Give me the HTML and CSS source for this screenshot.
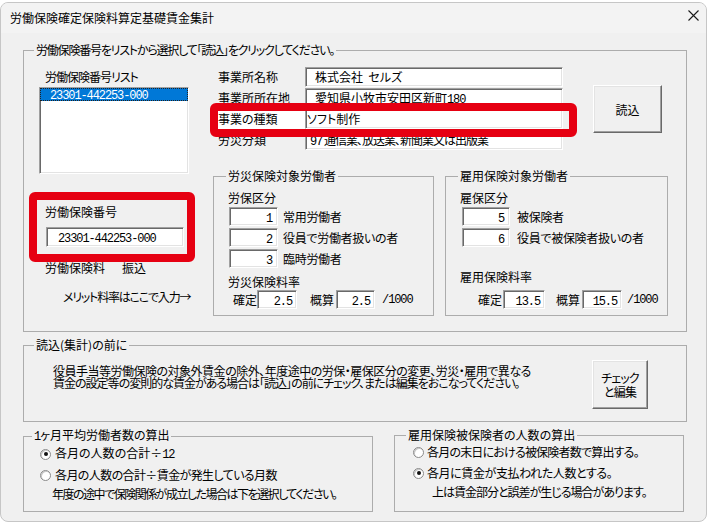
FILE: index.html
```html
<!DOCTYPE html>
<html lang="ja">
<head>
    <meta charset="UTF-8">
    <meta name="viewport" content="width=device-width, initial-scale=1.0">
    <title>労働保険確定保険料算定基礎賃金集計</title>
    <link rel="stylesheet" href="styles.css">
</head>
<body>

    <div class="rs-window">
        <div class="rs-titlebar">
            <span class="rs-title">労働保険確定保険料算定基礎賃金集計</span>
            <svg class="rs-close" width="11" height="11" viewBox="0 0 11 11">
                <path d="M0.5 0.5L10.5 10.5M10.5 0.5L0.5 10.5" stroke="#1a1a1a" stroke-width="1.1" fill="none"/>
            </svg>
        </div>

        <div class="rs-client">
            <fieldset class="rs-group rs-main">
                <legend class="rs-tight-12">労働保険番号をリストから選択して「読込」をクリックしてください。</legend>
                <div class="rs-main-body">
                    <div class="rs-left-col">
                        <div class="rs-list-label">労働保険番号リスト</div>
                        <div class="rs-listbox">
                            <div class="rs-list-item"><span class="rs-num">23301-442253-000</span></div>
                        </div>
                        <div class="rs-no-label">労働保険番号</div>
                        <div class="rs-field rs-no-field"><span class="rs-num">23301-442253-000</span></div>
                        <div class="rs-fee"><span>労働保険料</span><span class="rs-fee-kind">振込</span></div>
                        <div class="rs-merit">メリット料率はここで入力→</div>
                    </div>

                    <div class="rs-right-area">
                        <div class="rs-info-row">
                            <div class="rs-info">
                                <div class="rs-info-line">
                                    <span class="rs-info-label">事業所名称</span>
                                    <span class="rs-field rs-info-field">株式会社&nbsp;&nbsp;セルズ</span>
                                </div>
                                <div class="rs-info-line">
                                    <span class="rs-info-label">事業所所在地</span>
                                    <span class="rs-field rs-info-field">愛知県小牧市安田区新町<span class="rs-num">180</span></span>
                                </div>
                                <div class="rs-info-line">
                                    <span class="rs-info-label rs-info-label-hl">事業の種類</span>
                                    <span class="rs-field rs-info-field rs-info-field-tight">ソフト制作</span>
                                </div>
                                <div class="rs-info-line">
                                    <span class="rs-info-label">労災分類</span>
                                    <span class="rs-field rs-info-field rs-info-field-mid"><span class="rs-num">97</span> 通信業、放送業、新聞業又は出版業</span>
                                </div>
                            </div>
                            <button class="rs-button rs-read">読込</button>
                        </div>

                        <div class="rs-groups-row">
                            <fieldset class="rs-group rs-rousai">
                                <legend>労災保険対象労働者</legend>
                                <div class="rs-sub-label">労保区分</div>
                                <div class="rs-kubun rs-kubun-rousai">
                                    <div class="rs-kubun-row"><span class="rs-field rs-numbox"><span class="rs-num">1</span></span><span class="rs-kubun-text">常用労働者</span></div>
                                    <div class="rs-kubun-row"><span class="rs-field rs-numbox"><span class="rs-num">2</span></span><span class="rs-kubun-text">役員で労働者扱いの者</span></div>
                                    <div class="rs-kubun-row"><span class="rs-field rs-numbox"><span class="rs-num">3</span></span><span class="rs-kubun-text">臨時労働者</span></div>
                                </div>
                                <div class="rs-sub-label rs-rate-label-rousai">労災保険料率</div>
                                <div class="rs-rate-row rs-rate-rousai">
                                    <span>確定</span>
                                    <span class="rs-field rs-numbox rs-rate-box"><span class="rs-num">2.5</span></span>
                                    <span class="rs-rate-gaisan">概算</span>
                                    <span class="rs-field rs-numbox rs-rate-box rs-rate-box-2"><span class="rs-num">2.5</span></span>
                                    <span class="rs-num rs-per">/1000</span>
                                </div>
                            </fieldset>

                            <fieldset class="rs-group rs-koyou">
                                <legend>雇用保険対象労働者</legend>
                                <div class="rs-sub-label">雇保区分</div>
                                <div class="rs-kubun rs-kubun-koyou">
                                    <div class="rs-kubun-row"><span class="rs-field rs-numbox"><span class="rs-num">5</span></span><span class="rs-kubun-text">被保険者</span></div>
                                    <div class="rs-kubun-row"><span class="rs-field rs-numbox"><span class="rs-num">6</span></span><span class="rs-kubun-text">役員で被保険者扱いの者</span></div>
                                </div>
                                <div class="rs-sub-label rs-rate-label-koyou">雇用保険料率</div>
                                <div class="rs-rate-row rs-rate-koyou">
                                    <span>確定</span>
                                    <span class="rs-field rs-numbox rs-rate-box"><span class="rs-num">13.5</span></span>
                                    <span class="rs-rate-gaisan">概算</span>
                                    <span class="rs-field rs-numbox rs-rate-box rs-rate-box-2"><span class="rs-num">15.5</span></span>
                                    <span class="rs-num rs-per">/1000</span>
                                </div>
                            </fieldset>
                        </div>
                    </div>
                </div>
            </fieldset>

            <fieldset class="rs-group rs-before">
                <legend>読込(集計)の前に</legend>
                <div class="rs-before-body">
                    <p class="rs-before-text">
                        <span class="rs-before-line1">役員手当等労働保険の対象外賃金の除外、年度途中の労保・雇保区分の変更、労災・雇用で異なる</span><br>
                        <span class="rs-before-line2">賃金の設定等の変則的な賃金がある場合は「読込」の前にチェック、または編集をおこなってください。</span>
                    </p>
                    <button class="rs-button rs-check">チェック<br>と編集</button>
                </div>
            </fieldset>

            <div class="rs-bottom-row">
                <fieldset class="rs-group rs-avg">
                    <legend><span class="rs-num">1</span>ヶ月平均労働者数の算出</legend>
                    <div class="rs-radio-row rs-radio-first">
                        <span class="rs-radio rs-radio-on"></span>
                        <span class="rs-radio-text">各月の人数の合計÷<span class="rs-num">12</span></span>
                    </div>
                    <div class="rs-radio-row rs-radio-second">
                        <span class="rs-radio"></span>
                        <span class="rs-radio-text rs-tight-6">各月の人数の合計÷賃金が発生している月数</span>
                    </div>
                    <div class="rs-radio-note rs-tight-15">年度の途中で保険関係が成立した場合は下を選択してください。</div>
                </fieldset>

                <fieldset class="rs-group rs-count">
                    <legend>雇用保険被保険者の人数の算出</legend>
                    <div class="rs-radio-row rs-radio-first">
                        <span class="rs-radio"></span>
                        <span class="rs-radio-text rs-tight-8">各月の末日における被保険者数で算出する。</span>
                    </div>
                    <div class="rs-radio-row rs-radio-second">
                        <span class="rs-radio rs-radio-on"></span>
                        <span class="rs-radio-text rs-tight-4">各月に賃金が支払われた人数とする。</span>
                    </div>
                    <div class="rs-radio-note rs-tight-10">上は賃金部分と誤差が生じる場合があります。</div>
                </fieldset>
            </div>
        </div>

        <!-- red markers drawn over the dialog -->
        <div class="rs-mark rs-mark-kind"></div>
        <div class="rs-mark rs-mark-number"></div>
    </div>

</body>
</html>
```

FILE: styles.css
```css
:root {
    --face-color: #f0f0f0;
    --title-color: #f3f3f3;
    --group-line: #acacac;
    --shadow-dark: #696969;
    --shadow-mid: #a0a0a0;
    --shadow-light: #e3e3e3;
    --select-color: #0078d7;
    --mark-color: #e60012;
}

body {
    margin: 0;
    background-color: #fff;
    font-family: "Noto Sans CJK JP", sans-serif;
    font-size: 12px;
    font-feature-settings: "palt";
    color: #000;
}

/* kana in the dialog font run narrower than Noto, so long texts are tightened */
.rs-tight-4 { letter-spacing: -0.4px; }
.rs-tight-6 { letter-spacing: -0.6px; }
.rs-tight-8 { letter-spacing: -0.8px; }
.rs-tight-10 { letter-spacing: -1px; }
.rs-tight-12 { letter-spacing: -1.2px; }
.rs-tight-15 { letter-spacing: -1.5px; }

.rs-window {
    position: relative;
    box-sizing: border-box;
    width: 707px;
    height: 520px;
    margin-top: 2px;
    border: 1px solid #c6c6c6;
    border-radius: 8px;
    background-color: var(--face-color);
    overflow: hidden;
}

.rs-titlebar {
    display: flex;
    justify-content: space-between;
    height: 30px;
    padding: 0 7px 0 9px;
    background-color: var(--title-color);
}

.rs-title {
    line-height: 30px;
}

.rs-close {
    margin-top: 7px;
}

.rs-client {
    padding: 10px 0 0 22px;
}

/* group boxes */
.rs-group {
    box-sizing: border-box;
    margin: 0;
    padding: 0;
    min-width: 0;
    border: 1px solid var(--group-line);
}

.rs-group legend {
    margin-left: 10px;
    padding: 0 2px;
    line-height: 14px;
    white-space: nowrap;
}

.rs-num {
    font-family: "Liberation Mono", monospace;
    font-size: 12px;
    letter-spacing: -1.1px;
}

/* sunken edit field */
.rs-field {
    box-sizing: border-box;
    display: block;
    background-color: #fff;
    border: 1px solid;
    border-color: var(--shadow-mid) #fff #fff var(--shadow-mid);
    box-shadow: inset 1px 1px 0 var(--shadow-dark), inset -1px -1px 0 var(--shadow-light);
    white-space: nowrap;
    overflow: hidden;
}

.rs-button {
    box-sizing: border-box;
    padding: 0;
    font: inherit;
    color: #000;
    background-color: var(--face-color);
    border: 1px solid;
    border-color: #fff var(--shadow-dark) var(--shadow-dark) #fff;
    box-shadow: inset -1px -1px 0 var(--shadow-mid), inset 1px 1px 0 var(--shadow-light);
}

/* main group */
.rs-main {
    width: 664px;
    height: 289px;
}

.rs-main-body {
    display: flex;
}

.rs-left-col {
    width: 189px;
    flex-shrink: 0;
}

.rs-list-label {
    margin: 13px 0 0 21px;
    line-height: 14px;
    letter-spacing: -1px;
}

.rs-listbox {
    box-sizing: border-box;
    width: 150px;
    height: 87px;
    margin: 3px 0 0 15px;
    background-color: #fff;
    border: 1px solid;
    border-color: var(--shadow-mid) #fff #fff var(--shadow-mid);
    box-shadow: inset 1px 1px 0 var(--shadow-dark), inset -1px -1px 0 var(--shadow-light);
}

.rs-list-item {
    height: 13px;
    padding-left: 10px;
    line-height: 12px;
    color: #fff;
    background-color: var(--select-color);
    outline: 1px dotted #222;
    outline-offset: -1px;
}

.rs-no-label {
    margin: 31px 0 0 21px;
    line-height: 14px;
}

.rs-no-field {
    width: 138px;
    height: 20px;
    margin: 8px 0 0 22px;
    padding-left: 11px;
    line-height: 18px;
}

.rs-fee {
    margin: 14px 0 0 21px;
    line-height: 14px;
}

.rs-fee-kind {
    margin-left: 17px;
}

.rs-merit {
    margin: 15px 0 0 39px;
    line-height: 14px;
    letter-spacing: -1.2px;
    white-space: nowrap;
}

.rs-right-area {
    display: flex;
    flex-direction: column;
}

.rs-info-row {
    display: flex;
    margin-top: 10px;
}

.rs-info {
    display: flex;
    flex-direction: column;
    gap: 1px;
    padding-left: 5px;
}

.rs-info-line {
    display: flex;
    align-items: center;
    height: 20px;
}

.rs-info-label {
    width: 87px;
    height: 20px;
    line-height: 20px;
}

.rs-info-label-hl {
    background-color: #fff;
}

.rs-info-field {
    width: 258px;
    height: 20px;
    padding-left: 9px;
    line-height: 18px;
}

.rs-info-field-tight {
    padding-left: 1px;
}

.rs-info-field-mid {
    padding-left: 4px;
    letter-spacing: -1px;
}

.rs-read {
    width: 69px;
    height: 48px;
    margin: 18px 0 0 30px;
}

.rs-groups-row {
    display: flex;
    gap: 11px;
    margin-top: 19px;
}

.rs-rousai,
.rs-koyou {
    height: 147px;
}

.rs-rousai {
    width: 221px;
}

.rs-koyou {
    width: 223px;
}

.rs-rousai legend,
.rs-koyou legend {
    margin-left: 12px;
}

.rs-sub-label {
    margin: 8px 0 0 14px;
    line-height: 14px;
}

.rs-kubun {
    display: flex;
    flex-direction: column;
    gap: 2px;
    margin-top: 2px;
}

.rs-kubun-rousai {
    margin-left: 15px;
}

.rs-kubun-koyou {
    margin-left: 16px;
}

.rs-kubun-row {
    display: flex;
    align-items: center;
    height: 19px;
}

.rs-numbox {
    width: 49px;
    height: 19px;
    padding-right: 5px;
    text-align: right;
    line-height: 17px;
}

.rs-kubun-koyou .rs-numbox {
    width: 48px;
}

.rs-kubun-text {
    margin-left: 5px;
    letter-spacing: -0.3px;
}

.rs-kubun-koyou .rs-kubun-text {
    margin-left: 7px;
}

.rs-rate-label-rousai {
    margin-top: 7px;
}

.rs-rate-label-koyou {
    margin-top: 23px;
}

.rs-rate-row {
    display: flex;
    align-items: center;
    height: 19px;
}

.rs-rate-rousai {
    margin: 1px 0 0 19px;
}

.rs-rate-koyou {
    margin: 6px 0 0 32px;
}

.rs-rate-box {
    width: 40px;
    padding-right: 4px;
}

.rs-rate-gaisan {
    margin-left: 13px;
}

.rs-rate-box-2 {
    margin-left: 2px;
    width: 39px;
}

.rs-per {
    margin-left: 7px;
}

.rs-rate-koyou .rs-rate-box {
    width: 42px;
    margin-left: 1px;
}

.rs-rate-koyou .rs-rate-gaisan {
    margin-left: 11px;
}

.rs-rate-koyou .rs-rate-box-2 {
    width: 40px;
    margin-left: 2px;
}

.rs-rate-koyou .rs-per {
    margin-left: 5px;
}

/* before-reading group */
.rs-before {
    width: 664px;
    height: 84px;
    margin-top: 6px;
}

.rs-before-body {
    display: flex;
    align-items: flex-start;
}

.rs-before-text {
    margin: 13px 0 0 29px;
    line-height: 12px;
    white-space: nowrap;
}

.rs-before-line1 {
    letter-spacing: -0.5px;
}

.rs-before-line2 {
    letter-spacing: -1px;
}

.rs-check {
    width: 56px;
    height: 49px;
    margin: 8px 38px 0 auto;
    line-height: 14px;
    letter-spacing: -0.8px;
}

/* bottom groups */
.rs-bottom-row {
    display: flex;
    margin-top: 6px;
}

.rs-avg,
.rs-count {
    height: 84px;
}

.rs-avg {
    width: 350px;
}

.rs-avg legend {
    margin-left: 8px;
}

.rs-count {
    width: 290px;
    margin-left: 21px;
}

.rs-count legend {
    margin-left: 11px;
}

.rs-radio-row {
    display: flex;
    align-items: center;
    height: 14px;
}

.rs-radio-first {
    margin-top: 3px;
}

.rs-radio-second {
    margin-top: 7px;
}

.rs-radio {
    box-sizing: border-box;
    position: relative;
    flex-shrink: 0;
    width: 11px;
    height: 11px;
    border: 1px solid #8a8a8a;
    border-radius: 50%;
    background-color: #fff;
    box-shadow: inset 1px 1px 0 #c8c8c8;
}

.rs-radio-on::after {
    content: "";
    position: absolute;
    left: 2.5px;
    top: 2.5px;
    width: 4px;
    height: 4px;
    border-radius: 50%;
    background-color: #111;
}

.rs-radio-text {
    margin-left: 4px;
    line-height: 14px;
    white-space: nowrap;
}

.rs-radio-note {
    margin-top: 5px;
    line-height: 14px;
    white-space: nowrap;
}

.rs-avg .rs-radio-row {
    margin-left: 16px;
}

.rs-avg .rs-radio-note {
    margin-left: 28px;
}

.rs-count .rs-radio-row {
    margin-left: 18px;
}

.rs-count .rs-radio-text {
    margin-left: 3px;
}

.rs-count .rs-radio-note {
    margin-left: 37px;
}

/* red markers */
.rs-mark {
    position: absolute;
    box-sizing: border-box;
    border: 8px solid var(--mark-color);
    border-radius: 6px;
}

.rs-mark-kind {
    left: 209px;
    top: 100px;
    width: 367px;
    height: 34px;
}

.rs-mark-number {
    left: 28px;
    top: 189px;
    width: 166px;
    height: 70px;
}
```
